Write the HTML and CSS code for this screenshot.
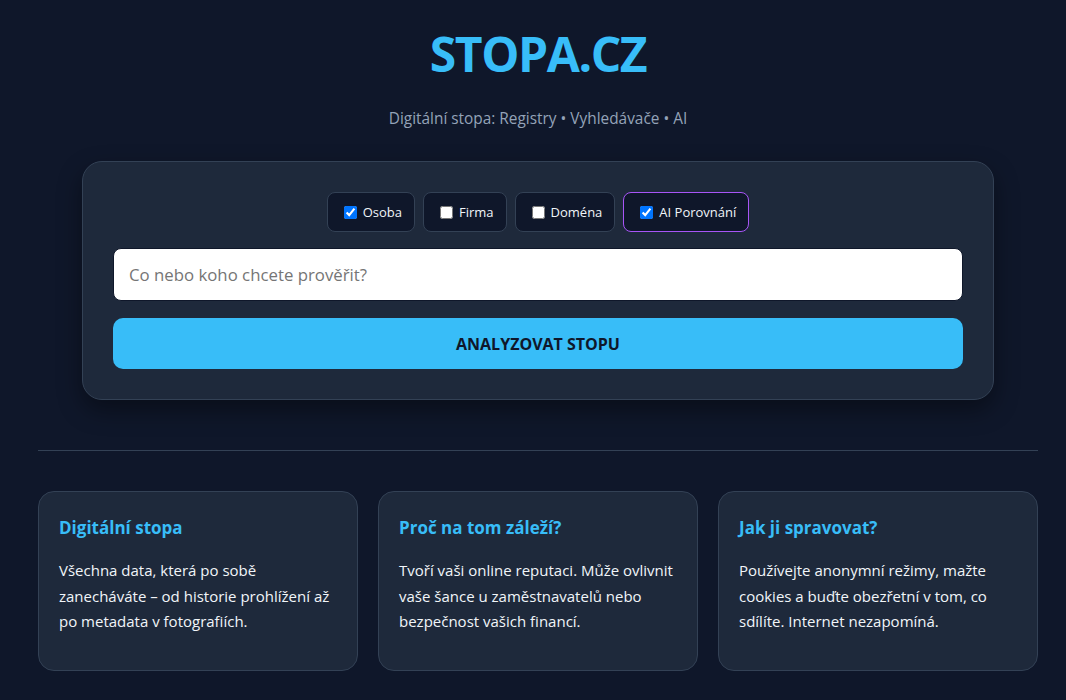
FILE: index.html
```html
<!DOCTYPE html>
<html lang="cs">
  <head>
    <meta charset="UTF-8" />
    <meta name="viewport" content="width=device-width, initial-scale=1.0" />
    <title>STOPA.CZ</title>
    <link rel="stylesheet" href="styles.css">
  </head>
  <body>
    <div class="page">
      <header class="header">
        <h1>STOPA.CZ</h1>
        <p class="tagline">Digitální stopa: Registry • Vyhledávače • AI</p>
      </header>

      <div class="search-box">
        <div class="filters">
          <label class="filter"><input type="checkbox" checked /> Osoba</label>
          <label class="filter"><input type="checkbox" /> Firma</label>
          <label class="filter"><input type="checkbox" /> Doména</label>
          <label class="filter ai"><input type="checkbox" checked /> AI Porovnání</label>
        </div>
        <input class="query" type="text" placeholder="Co nebo koho chcete prověřit?" />
        <button class="submit">ANALYZOVAT STOPU</button>
      </div>

      <hr class="divider" />

      <div class="info">
        <div class="info-card">
          <h3>Digitální stopa</h3>
          <p>Všechna data, která po sobě zanecháváte – od historie prohlížení až po metadata v fotografiích.</p>
        </div>
        <div class="info-card">
          <h3>Proč na tom záleží?</h3>
          <p>Tvoří vaši online reputaci. Může ovlivnit vaše šance u zaměstnavatelů nebo bezpečnost vašich financí.</p>
        </div>
        <div class="info-card">
          <h3>Jak ji spravovat?</h3>
          <p>Používejte anonymní režimy, mažte cookies a buďte obezřetní v tom, co sdílíte. Internet nezapomíná.</p>
        </div>
      </div>
    </div>
  </body>
</html>
```

FILE: styles.css
```css
* {
  margin: 0;
  padding: 0;
  box-sizing: border-box;
}
body {
  font-family: "Open Sans", "Noto Sans", sans-serif;
  background: #0f172a;
  color: #f1f5f9;
  padding-left: 10px;
}
.page {
  width: 1000px;
  margin: 0 auto;
}
.header {
  text-align: center;
  padding-top: 22px;
}
.header h1 {
  font-size: 48px;
  font-weight: 700;
  color: #38bdf8;
  line-height: 64px;
  letter-spacing: -1.4px;
}
.tagline {
  margin-top: 22px;
  font-size: 15.4px;
  color: #94a3b8;
}
.search-box {
  width: 912px;
  margin: 32px auto 0;
  padding: 30px;
  background: #1e293b;
  border: 1px solid #334155;
  border-radius: 20px;
  box-shadow: 0 10px 25px rgba(0, 0, 0, 0.4);
}
.filters {
  display: flex;
  justify-content: center;
  gap: 8px;
}
.filter {
  display: flex;
  align-items: center;
  gap: 6px;
  height: 40px;
  padding: 0 12px 0 16px;
  background: #0f172a;
  border: 1px solid #334155;
  border-radius: 8px;
  font-size: 13px;
  color: #f1f5f9;
}
.filter input {
  width: 13px;
  height: 13px;
  margin: 0;
}
.filter.ai {
  border-color: #a855f7;
}
.query {
  display: block;
  width: 100%;
  height: 53px;
  margin-top: 16px;
  padding: 0 15px;
  background: #fff;
  border: 1px solid #0f172a;
  border-radius: 8px;
  font-family: inherit;
  font-size: 16.8px;
  color: #0f172a;
}
.query::placeholder {
  color: #757575;
}
.submit {
  display: block;
  width: 100%;
  height: 51px;
  margin-top: 17px;
  background: #38bdf8;
  border: none;
  border-radius: 10px;
  font-family: inherit;
  font-size: 16px;
  font-weight: 700;
  color: #0f172a;
  cursor: pointer;
}
.divider {
  margin-top: 50px;
  border: none;
  border-top: 1px solid #334155;
}
.info {
  display: grid;
  grid-template-columns: repeat(3, 1fr);
  gap: 20px;
  margin-top: 40px;
}
.info-card {
  height: 180px;
  padding: 24px 20px;
  background: #1e293b;
  border: 1px solid #334155;
  border-radius: 16px;
}
.info-card h3 {
  font-size: 17px;
  font-weight: 700;
  color: #38bdf8;
  line-height: 24px;
}
.info-card p {
  margin-top: 18px;
  font-size: 15px;
  line-height: 25.5px;
  color: #f1f5f9;
}
```
